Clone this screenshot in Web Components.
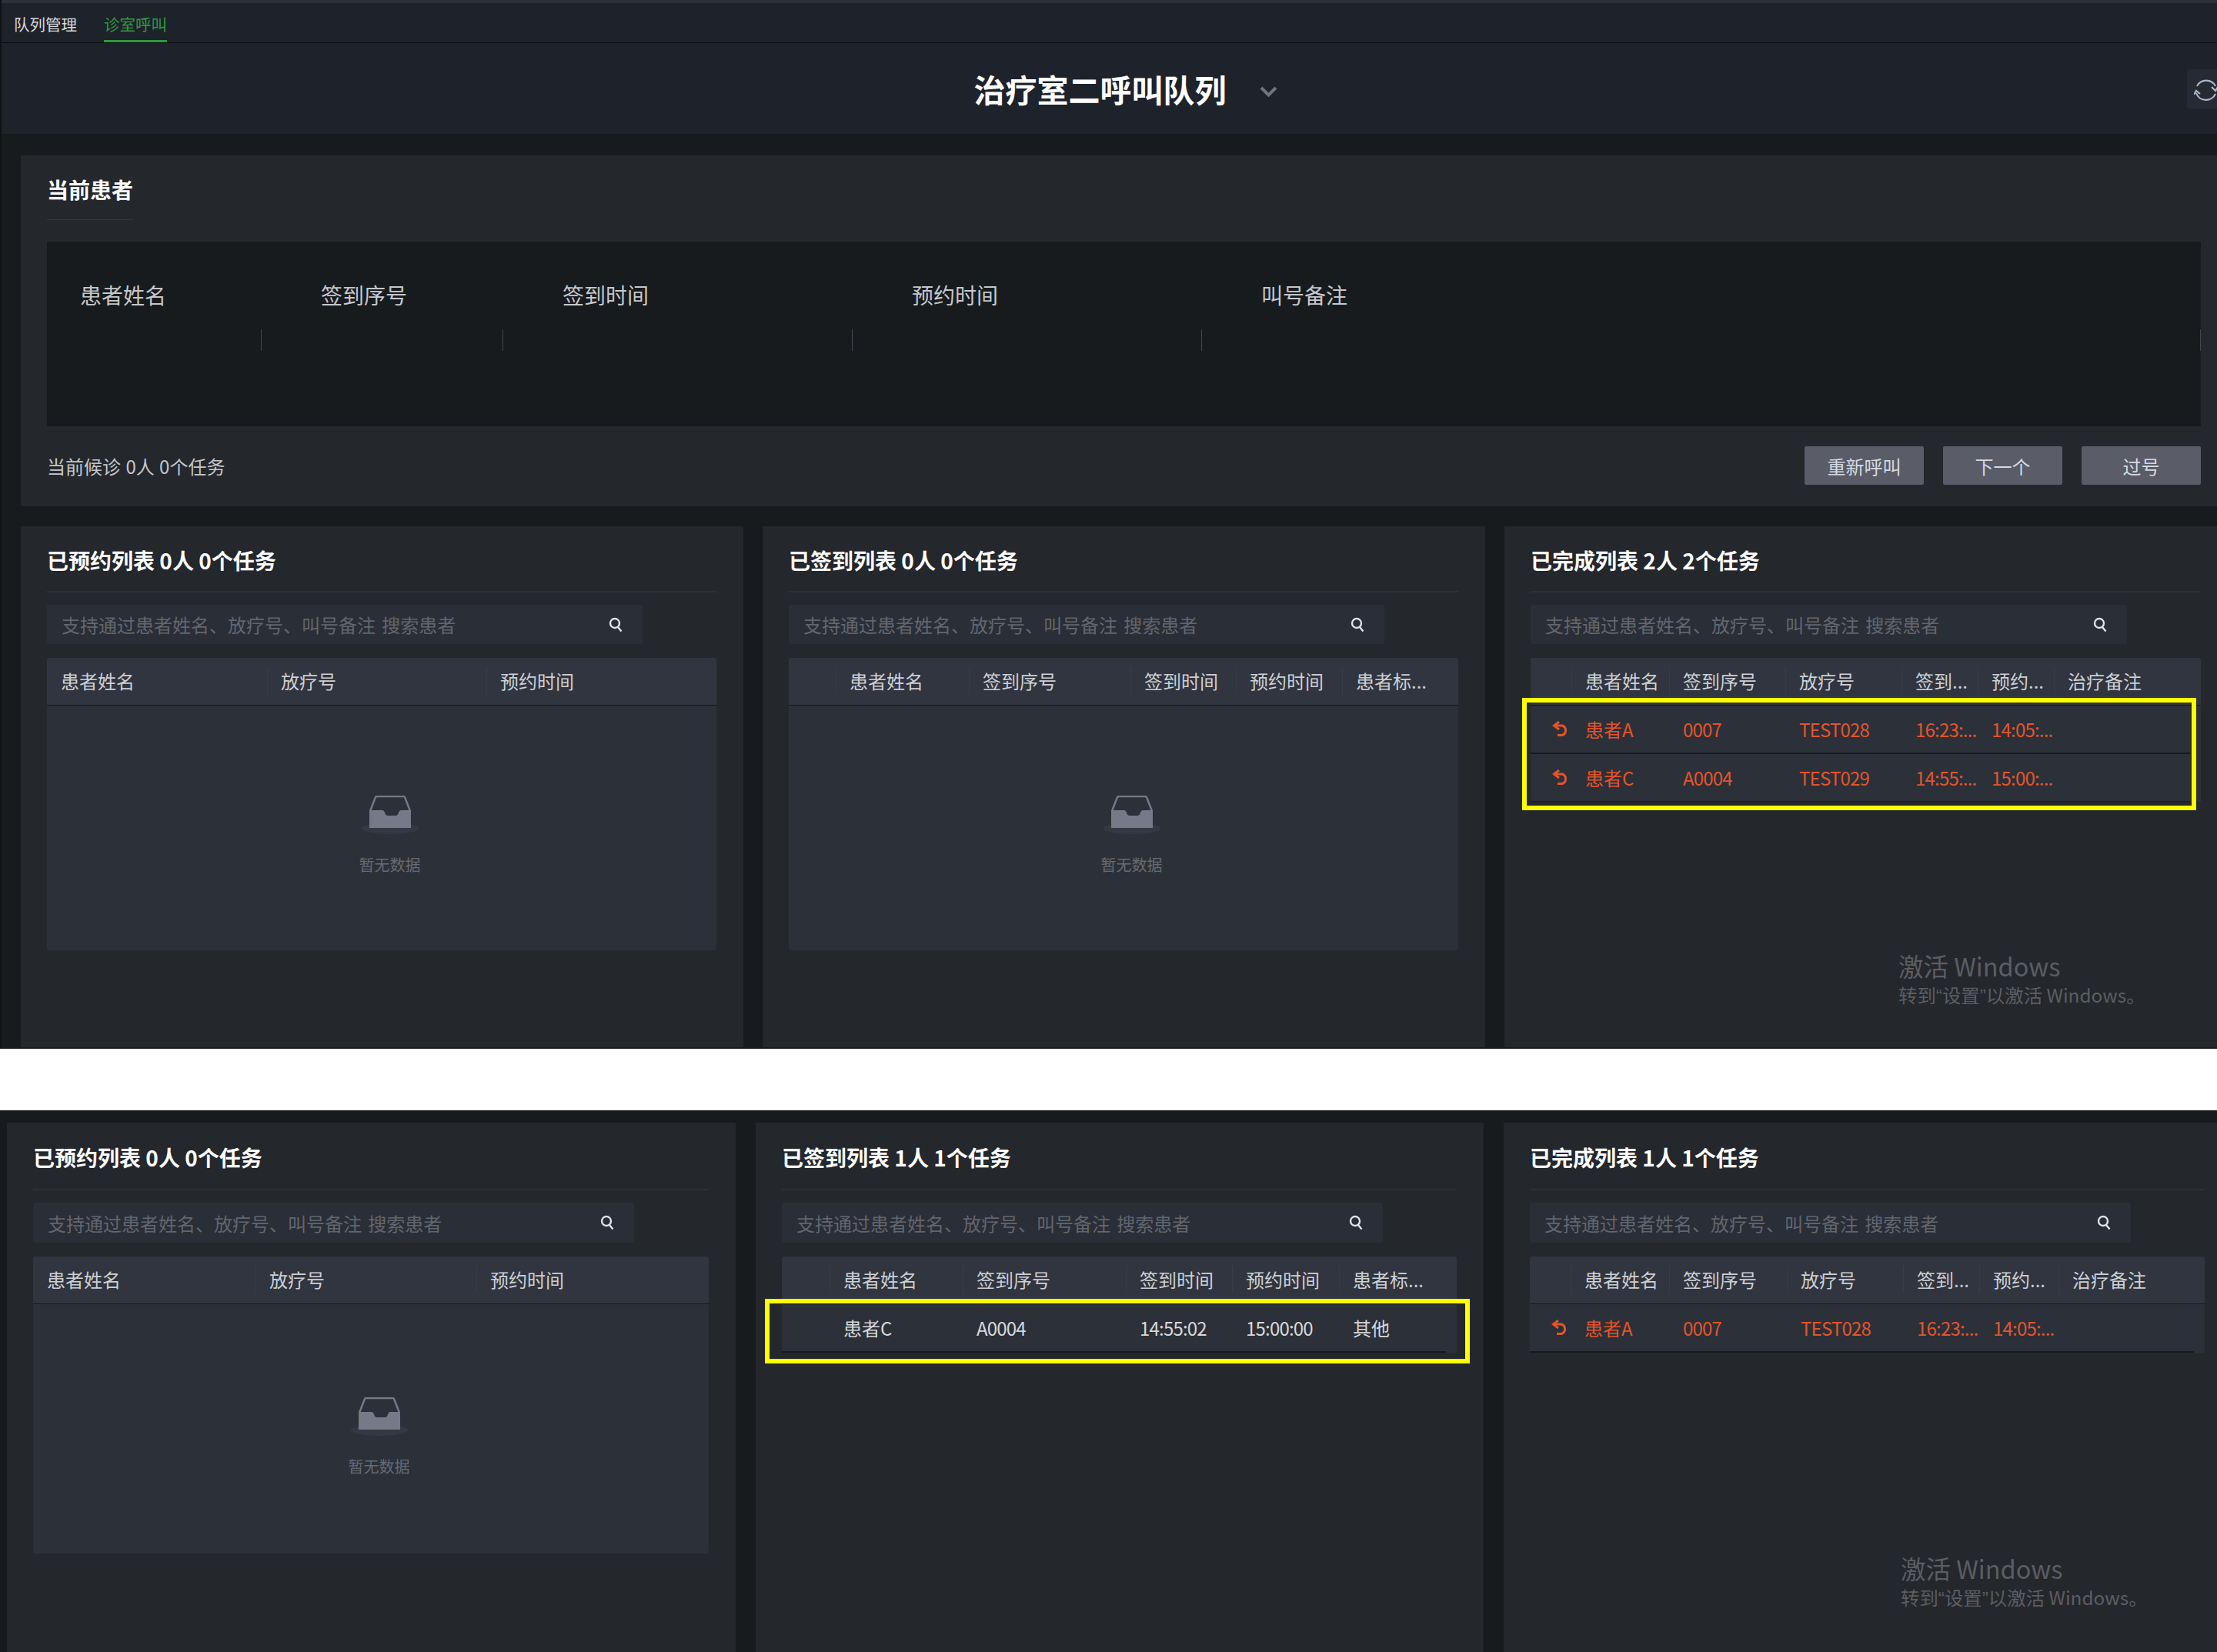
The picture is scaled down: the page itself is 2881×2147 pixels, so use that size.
<!DOCTYPE html>
<html lang="zh-CN">
<head>
<meta charset="utf-8">
<title>诊室呼叫</title>
<style>
  html, body { margin: 0; background: #fff; overflow: hidden; }
  body { width: 2881px; height: 2147px; font-family: "Noto Sans CJK SC", "Liberation Sans", sans-serif; color: #cfd2d6; }
  .top { display: block; width: 2881px; height: 1363px; overflow: hidden; background: #171b1e; border-left: 2px solid #101316; box-sizing: border-box; }
  .bottom { display: block; width: 2881px; height: 704px; margin-top: 80px; overflow: hidden; background: #171b1e; position: relative; }
  .lists { display: grid; }
  .top .lists { grid-template-columns: 939px 939px 940px; column-gap: 25px; padding: 26px 0 0 25px; }
  .bottom .lists { grid-template-columns: 947px 946px 946px; column-gap: 26px; padding: 16px 0 0 9px; }
</style>
</head>
<body>

<div class="top">
  <queue-tabs></queue-tabs>
  <queue-header>治疗室二呼叫队列</queue-header>
  <current-patient></current-patient>
  <div class="lists">
    <list-card heading="已预约列表 0人 0个任务">
      <data-table cols="286px 285px 300px" head="患者姓名|放疗号|预约时间" empty="318"></data-table>
    </list-card>
    <list-card heading="已签到列表 0人 0个任务">
      <data-table cols="61px 173px 210px 137px 138px 152px" head="|患者姓名|签到序号|签到时间|预约时间|患者标..." empty="318"></data-table>
    </list-card>
    <list-card heading="已完成列表 2人 2个任务">
      <data-table cols="53px 127px 151px 151px 99px 99px 191px" head="|患者姓名|签到序号|放疗号|签到...|预约...|治疗备注" tone="done"
        rows="↩|患者A|0007|TEST028|16:23:...|14:05:...|;↩|患者C|A0004|TEST029|14:55:...|15:00:...|">
        <highlight-box style="left:-11px;top:52px;width:876px;height:146px"></highlight-box>
      </data-table>
      <windows-mark style="left:512px;top:550px"></windows-mark>
    </list-card>
  </div>
</div>

<div class="bottom">
  <div class="lists">
    <list-card heading="已预约列表 0人 0个任务" wide>
      <data-table cols="289px 287px 302px" head="患者姓名|放疗号|预约时间" empty="324"></data-table>
    </list-card>
    <list-card heading="已签到列表 1人 1个任务" wide>
      <data-table cols="62px 173px 212px 138px 139px 154px" head="|患者姓名|签到序号|签到时间|预约时间|患者标..."
        rows="|患者C|A0004|14:55:02|15:00:00|其他">
        <highlight-box style="left:-22px;top:55px;width:916px;height:84px"></highlight-box>
      </data-table>
    </list-card>
    <list-card heading="已完成列表 1人 1个任务" wide>
      <data-table cols="53px 128px 153px 151px 99px 103px 191px" head="|患者姓名|签到序号|放疗号|签到...|预约...|治疗备注" tone="done"
        rows="↩|患者A|0007|TEST028|16:23:...|14:05:...|"></data-table>
      <windows-mark style="left:516px;top:558px"></windows-mark>
    </list-card>
  </div>
</div>

<script>
// tabs on top of the first screenshot
class QueueTabs extends HTMLElement {
  constructor() {
    super();
    this.attachShadow({ mode: "open" });
    this.shadowRoot.innerHTML = `
      <style>
        :host { display: block; background: #1e222b; border-top: 4px solid #2d3037; border-bottom: 1.5px solid #0c0e10; height: 51px; font-size: 20.5px; }
        nav { display: flex; gap: 35px; padding-left: 16px; height: 100%; }
        span { display: block; line-height: 54px; height: 49px; color: #d6d9dc; }
        .on { color: #2f9a41; border-bottom: 3px solid #2f9a41; height: 48px; }
      </style>
      <nav><span>队列管理</span><span class="on">诊室呼叫</span></nav>`;
  }
}
customElements.define("queue-tabs", QueueTabs);

class QueueHeader extends HTMLElement {
  constructor() {
    super();
    this.attachShadow({ mode: "open" });
    this.shadowRoot.innerHTML = `
      <style>
        :host { display: flex; align-items: center; justify-content: center; position: relative; height: 118px; background: #1e222b; padding-left: 42px; box-sizing: border-box; }
        h1 { margin: 0; font-size: 41px; line-height: 60px; font-weight: 700; color: #fff; }
        svg.chev { width: 23px; height: 14px; margin: 8px 0 0 43px; }
        .refresh { position: absolute; left: 2840px; top: 34px; width: 60px; height: 51px; background: #262a32; border-radius: 3px; }
        .refresh svg { width: 32px; height: 32px; margin: 12px 0 0 9px; display: block; }
      </style>
      <h1><slot></slot></h1>
      <svg class="chev" viewBox="0 0 23 14"><path d="M2 2 L11.5 11.5 L21 2" fill="none" stroke="#6f7580" stroke-width="4"/></svg>
      <div class="refresh">
        <svg viewBox="0 0 32 32" fill="none" stroke="#a9b6cf" stroke-width="2.2">
          <path d="M4 10 A13.5 13.5 0 0 1 28 10"/><path d="M28 20 A13.5 13.5 0 0 1 3 19"/>
          <path d="M23 11 L28 16 L31 11"/><path d="M0 21 L3 16 L8 20"/>
        </svg>
      </div>`;
  }
}
customElements.define("queue-header", QueueHeader);

class CurrentPatient extends HTMLElement {
  constructor() {
    super();
    this.attachShadow({ mode: "open" });
    const labels = ["患者姓名", "签到序号", "签到时间", "预约时间", "叫号备注"];
    this.shadowRoot.innerHTML = `
      <style>
        :host { display: block; margin: 28px 0 0 25px; padding: 24px 21px 28px 34px; background: #24272c; }
        h2 { display: inline-block; margin: 0; padding-bottom: 19px; font-size: 28px; line-height: 40px; font-weight: 700; color: #fff; border-bottom: 1.5px solid #33363b; }
        .panel { display: grid; grid-template-columns: 279px 314px 454px 454px 1fr; height: 240px; margin-top: 28px; background: #171b1e; }
        .cell { position: relative; padding: 49px 0 0 77px; font-size: 28px; line-height: 40px; color: #c5c8cc; }
        .cell:first-child { padding-left: 43px; }
        .cell::after { content: ""; position: absolute; right: 0; top: 114px; width: 1.5px; height: 28px; background: #43464d; }
        .foot { display: flex; align-items: center; margin-top: 26px; font-size: 24px; color: #c4c7cb; }
        .foot p { margin: 0; flex: 1; word-spacing: 1px; }
        button { width: 155px; height: 50px; margin-left: 25px; border: 0; border-radius: 2px; padding: 0; background: #5a5c68; color: #d6dae0; font: inherit; }
      </style>
      <h2>当前患者</h2>
      <div class="panel">${labels.map((l) => `<div class="cell">${l}</div>`).join("")}</div>
      <div class="foot">
        <p>当前候诊 0人 0个任务</p>
        <button>重新呼叫</button><button>下一个</button><button>过号</button>
      </div>`;
  }
}
customElements.define("current-patient", CurrentPatient);

class SearchBox extends HTMLElement {
  constructor() {
    super();
    this.attachShadow({ mode: "open" });
    this.shadowRoot.innerHTML = `
      <style>
        :host { display: flex; align-items: center; width: 89%; background: #2a2e37; border-radius: 3px; padding: 0 26px 0 19px; box-sizing: border-box; font-size: 24px; color: #62666e; }
        span { flex: 1; word-spacing: 3px; }
        svg { width: 18px; height: 20px; }
      </style>
      <span>支持通过患者姓名、放疗号、叫号备注 搜索患者</span>
      <svg viewBox="0 0 18 20" fill="none" stroke="#dfe4ea" stroke-width="2.4"><circle cx="8" cy="8" r="6"/><path d="M12 13 L16.5 18.5"/></svg>`;
  }
}
customElements.define("search-box", SearchBox);

class EmptyState extends HTMLElement {
  constructor() {
    super();
    this.attachShadow({ mode: "open" });
    this.shadowRoot.innerHTML = `
      <style>
        :host { display: flex; flex-direction: column; align-items: center; padding: 117px 0 0 21px; box-sizing: border-box; background: #2c3038; border-radius: 0 0 3px 3px; font-size: 20px; color: #666b75; }
        :host([wide]) { padding-top: 121px; }
        svg { width: 76px; height: 50px; }
        p { margin: 25px 0 0; line-height: 30px; }
      </style>
      <svg viewBox="0 0 76 50">
        <ellipse cx="38" cy="42.5" rx="37.5" ry="7.5" fill="#343842"/>
        <path d="M12 20 L19 2 Q19.5 1 21 1 H55 Q56.5 1 57 2 L64 20" fill="none" stroke="#767a88" stroke-width="2.4"/>
        <path d="M11 19 H28 Q30 19 31 22 Q32 26 35 26 H45 Q48 26 49 22 Q50 19 52 19 H65 V42 H11 Z" fill="#767a88"/>
      </svg>
      <p>暂无数据</p>`;
  }
}
customElements.define("empty-state", EmptyState);

// the yellow frame somebody drew over the screenshot
class HighlightBox extends HTMLElement {
  constructor() {
    super();
    this.attachShadow({ mode: "open" });
    this.shadowRoot.innerHTML = `<style>:host { display: block; position: absolute; box-sizing: border-box; border: 6px solid #ffff00; pointer-events: none; }</style>`;
  }
}
customElements.define("highlight-box", HighlightBox);

class WindowsMark extends HTMLElement {
  constructor() {
    super();
    this.attachShadow({ mode: "open" });
    this.shadowRoot.innerHTML = `
      <style>
        :host { display: block; position: absolute; color: #5b5e63; white-space: nowrap; }
        div { font-size: 32.5px; line-height: 42px; }
        p { margin: 0; font-size: 24.4px; line-height: 34px; }
        i { font-style: normal; font-family: "Liberation Sans", sans-serif; }
      </style>
      <div>激活 Windows</div>
      <p>转到<i>“</i>设置<i>”</i>以激活 Windows。</p>`;
  }
}
customElements.define("windows-mark", WindowsMark);

class DataTable extends HTMLElement {
  constructor() {
    super();
    this.attachShadow({ mode: "open" });
  }

  connectedCallback() {
    const cols = this.getAttribute("cols");
    const head = this.getAttribute("head").split("|");
    const rows = this.hasAttribute("rows") ? this.getAttribute("rows").split(";") : [];
    const empty = this.getAttribute("empty");
    const back = `<svg viewBox="0 0 21 20" fill="none" stroke="currentColor" stroke-width="3"><path d="M9 1 L2.5 6 L9 11"/><path d="M3 6 H13 A6.3 6.5 0 0 1 13 18.5 H7"/></svg>`;

    const rowHtml = rows.map((r) => {
      const cells = r.split("|").map((c) => {
        if (c === "↩") return `<div class="td">${back}</div>`;
        // latin values run a bit narrower than the cjk font draws them
        const latin = /^[\x00-\x7f]+$/.test(c);
        return `<div class="td ${latin ? "latin" : ""}">${c}</div>`;
      });
      return `<div class="row">${cells.join("")}</div>`;
    });

    this.shadowRoot.innerHTML = `
      <style>
        :host { display: block; position: relative; font-size: 24px; }
        .head, .row { display: grid; grid-template-columns: ${cols}; }
        .head { height: 62px; box-sizing: border-box; background: #31353f; border-bottom: 1.5px solid #14171b; border-radius: 3px 3px 0 0; }
        .th { position: relative; padding-left: 18px; line-height: 60px; color: #cdd0d5; white-space: nowrap; }
        .th:not(:first-child)::before { content: ""; position: absolute; left: 0; top: 12px; width: 1px; height: 36px; background: #383c47; }
        .row { position: relative; height: 62.5px; background: #2c3038; color: ${this.getAttribute("tone") === "done" ? "#e2552c" : "#d6d9dc"}; }
        .row::after { content: ""; position: absolute; left: 0; right: 14px; bottom: 0; height: 1.5px; background: #17191e; }
        .td { padding-left: 18px; line-height: 62px; white-space: nowrap; }
        .td.latin { letter-spacing: -0.8px; }
        .td svg { display: block; width: 21px; height: 20px; margin: 20px 0 0 10px; }
        empty-state { height: ${empty}px; }
      </style>
      <div class="head">${head.map((h) => `<div class="th">${h}</div>`).join("")}</div>
      ${rowHtml.join("")}
      ${empty ? `<empty-state ${empty === "324" ? "wide" : ""}></empty-state>` : ""}
      <slot></slot>`;
  }
}
customElements.define("data-table", DataTable);

class ListCard extends HTMLElement {
  constructor() {
    super();
    this.attachShadow({ mode: "open" });
  }

  connectedCallback() {
    const wide = this.hasAttribute("wide");
    this.shadowRoot.innerHTML = `
      <style>
        :host { display: block; position: relative; height: ${wide ? 700 : 677}px; padding: 0 35px 0 34px; background: #24272c; box-sizing: border-box; }
        h3 { margin: 0; height: ${wide ? 86 : 84}px; line-height: ${wide ? 90 : 88}px; font-size: 28px; font-weight: 700; color: #fff; border-bottom: 2px solid #2e3035; }
        search-box { height: ${wide ? 52 : 51}px; margin: 16px 0 18px; }
      </style>
      <h3>${this.getAttribute("heading")}</h3>
      <search-box></search-box>
      <slot></slot>`;
  }
}
customElements.define("list-card", ListCard);
</script>
</body>
</html>
